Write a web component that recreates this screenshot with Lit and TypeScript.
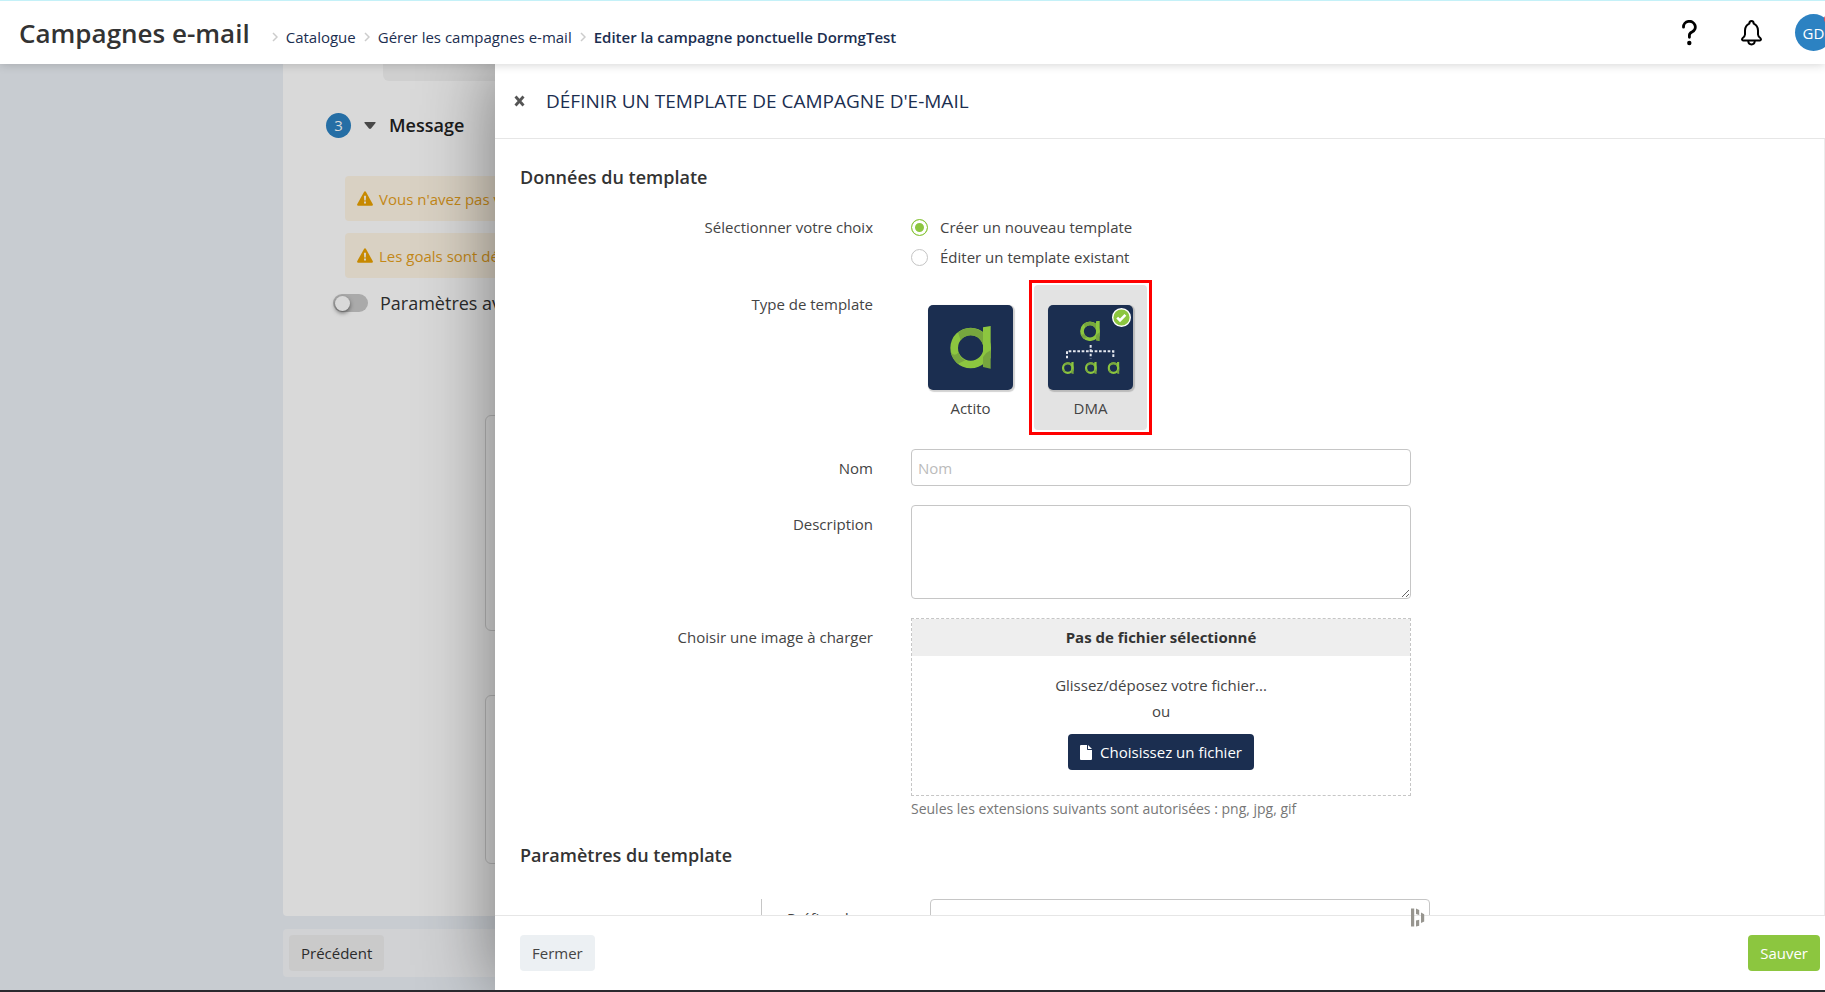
import { LitElement, html, css, svg } from "lit";
import { customElement, state } from "lit/decorators.js";

const letterA = svg`
  <path fill="#8cc63f" fill-rule="evenodd" d="M128 68a61 61 0 1 0 0 122a61 61 0 1 0 0-122zM128 91a38 38 0 1 1 0 76a38 38 0 1 1 0-76z"/>
  <path fill="#77a63e" d="M90 82Q128 56 165 82V120Q155 92 128 91Q108 92 98 106Z"/>
  <path fill="#77a63e" d="M68 140Q78 158 92 142Q96 160 112 166L90 176Q72 162 68 140Z"/>
  <path fill="#8cc63f" d="M165 67L188 63V160L165 172Z"/>
  <path fill="#77a63e" d="M188 136V191L165 186V156Q174 142 188 136Z"/>`;

@customElement("app-root")
export class AppRoot extends LitElement {
  @state() private mode = "new";
  @state() private type = "dma";

  static styles = css`
    :host {
      display: flex;
      flex-direction: column;
      position: relative;
      height: 100vh;
      overflow: hidden;
      box-sizing: border-box;
      border-bottom: 2px solid #2b2a2f;
      background: #ecf0f6;
      color: #333;
      font: 14px/20px "Open Sans", "Noto Sans", sans-serif;
    }
    *, *::before, *::after { box-sizing: border-box; }
    button, input, textarea { font: inherit; color: inherit; }
    button { border: 0; cursor: pointer; }
    svg { display: block; flex: none; }
    h1, h2, h3, p, ol { margin: 0; padding: 0; }

    .top {
      position: relative;
      z-index: 3;
      flex: none;
      display: flex;
      align-items: center;
      height: 64px;
      padding-left: 19px;
      background: #fff;
      border-top: 1px solid #c4f1f8;
      box-shadow: 0 0 10px rgba(0, 0, 0, 0.2);
    }
    .top h1 { font-size: 26px; line-height: 36px; font-weight: 600; white-space: nowrap; }
    .crumbs {
      display: flex;
      align-items: center;
      list-style: none;
      padding: 8px 0 0 22px;
      font-size: 15px;
      color: #1b2e50;
      white-space: nowrap;
    }
    .crumbs li { display: flex; align-items: center; gap: 8px; }
    .crumbs li + li { margin-left: 8px; }
    .crumbs a { color: inherit; text-decoration: none; }
    .current { font-weight: 600; }
    .tools { display: flex; align-items: center; margin-left: auto; }
    .icon { padding: 0; background: none; }
    .bell { margin: 0 33px 0 44px; }
    .avatar {
      position: relative;
      width: 37px;
      height: 37px;
      margin-right: -7px;
      padding: 0;
      border-radius: 50%;
      background: #2c82c2;
      color: #fff;
      font-size: 15px;
    }
    .dot { position: absolute; top: 1px; right: 0; width: 8px; height: 8px; border-radius: 50%; background: #ee4b52; }

    .page { flex: 1; min-height: 0; display: flex; flex-direction: column; gap: 13px; padding: 0 0 13px 283px; }
    .card { flex: 1; min-height: 0; overflow: hidden; background: #fff; border-radius: 0 0 4px 4px; }
    .ghost { height: 17px; margin-left: 100px; background: #f4f4f4; border-radius: 0 0 0 6px; }
    .step { display: flex; align-items: center; margin: 31px 0 0 43px; height: 26px; }
    .num { width: 25px; height: 25px; border-radius: 50%; background: #2c82c2; color: #fff; font-size: 15px; line-height: 25px; text-align: center; }
    .step svg { margin: 0 13px; }
    .step h2 { font-size: 18px; line-height: 26px; font-weight: 600; color: #222; }
    .alerts { display: grid; gap: 12px; margin: 38px 0 0 62px; }
    .alert {
      display: flex;
      align-items: center;
      gap: 6px;
      height: 45px;
      padding-left: 12px;
      background: #fff6e6;
      border-radius: 4px;
      color: #e6a01c;
      font-size: 15px;
    }
    .switch { display: flex; align-items: center; gap: 12px; height: 26px; margin: 12px 0 0 50px; font-size: 18px; }
    .switch input {
      appearance: none;
      width: 35px;
      height: 18px;
      margin: 0;
      padding: 2px;
      border-radius: 9px;
      background: #c8c8c8;
    }
    .switch input::before {
      content: "";
      display: block;
      width: 15px;
      height: 15px;
      border-radius: 50%;
      background: #fff;
      box-shadow: 0 2px 4px rgba(0, 0, 0, 0.5);
    }
    .frames { display: grid; gap: 64px; margin: 99px 0 0 202px; }
    .frame { height: 216px; border: 1px solid #d8d8d8; border-radius: 6px; }
    .frame.low { height: 169px; }
    .bar { flex: none; display: flex; align-items: center; height: 48px; padding-left: 6px; background: #f6f7fa; border-radius: 4px; }
    .prev { height: 36px; padding: 0 12px; border-radius: 4px; background: #eee; font-size: 15px; }

    .shade { position: absolute; z-index: 1; inset: 0; background: rgba(0, 0, 0, 0.15); }
    .drawer {
      position: absolute;
      z-index: 2;
      inset: 64px 0 0 495px;
      display: flex;
      flex-direction: column;
      background: #fff;
      color: #444;
      box-shadow: 0 0 70px rgba(0, 0, 0, 0.45);
    }
    .head { flex: none; display: flex; align-items: center; gap: 21px; height: 75px; padding-left: 19px; border-bottom: 1px solid #e6e6e6; }
    .head h2 { font-size: 19px; line-height: 28px; font-weight: 400; color: #1b2e50; text-transform: uppercase; }
    .body { flex: 1; min-height: 0; overflow: hidden; padding: 26px 25px 0; border-right: 1px solid #ececec; }
    h3 { font-size: 18px; line-height: 24px; font-weight: 600; color: #333; }
    .row { display: grid; grid-template-columns: 353px minmax(0, 500px); column-gap: 38px; margin-top: 19px; font-size: 15px; }
    .name { padding-top: 9px; text-align: right; }
    .radios { display: grid; gap: 12px; padding-top: 10px; }
    .radio { display: flex; align-items: center; gap: 12px; line-height: 18px; }
    .radio input { appearance: none; width: 17px; height: 17px; margin: 0; border: 1px solid #c4c4c4; border-radius: 50%; background: #fff; }
    .radio input:checked { border-color: #8cc63f; background: #8cc63f; box-shadow: inset 0 0 0 3px #fff; }
    .tiles { display: flex; gap: 7px; padding-left: 3px; }
    .tile {
      position: relative;
      width: 113px;
      height: 145px;
      padding: 20px 14px 0;
      border-radius: 4px;
      text-align: center;
      cursor: pointer;
    }
    .tile input { position: absolute; opacity: 0; }
    .tile.on { background: #e3e3e3; }
    .tile.on::after { content: ""; position: absolute; inset: -5px; border: 3px solid #f00; }
    .logo { border-radius: 5px; background: #1b2e50; box-shadow: 1px 1px 1px 1px rgba(0, 0, 0, 0.18); }
    .tile span { display: block; margin-top: 8px; }
    .tick { position: absolute; top: 23px; right: 16px; }
    .text { width: 100%; height: 37px; padding: 0 6px; border: 1px solid #c6c6c6; border-radius: 4px; background: #fff; }
    .text::placeholder { color: #bbb; }
    .area { display: block; height: 94px; padding: 6px; }
    .drop { border: 1px dashed #c6c6c6; text-align: center; }
    .drop strong { display: block; background: #eee; color: #333; font-weight: 700; font-size: 15px; line-height: 37px; }
    .zone { padding: 16px 0 25px; line-height: 26px; }
    .pick {
      display: inline-flex;
      align-items: center;
      gap: 8px;
      height: 36px;
      margin-top: 10px;
      padding: 0 12px;
      border-radius: 4px;
      background: #1b2e50;
      color: #fff;
      font-weight: 500;
      vertical-align: top;
    }
    .hint { margin-top: 3px; font-size: 14px; color: #777; }
    .second { margin-top: 24px; }
    .nested { display: grid; grid-template-columns: 143px minmax(0, 500px); margin: 32px 0 0 241px; padding-left: 25px; border-left: 1px solid #c6c6c6; font-size: 15px; }
    .nested .name { text-align: left; }
    .foot { position: relative; flex: none; display: flex; align-items: center; justify-content: space-between; height: 75px; padding: 0 5px 0 25px; border-top: 1px solid #e6e6e6; font-size: 15px; }
    .close { height: 36px; padding: 0 12px; border-radius: 4px; background: #ecf0f3; }
    .save { height: 36px; padding: 0 12px; border-radius: 4px; background: #8cc63f; color: #fff; font-weight: 500; }
    .helper { position: absolute; top: -8px; left: 916px; }
  `;

  private crumb() {
    return html`<svg width="6" height="10" viewBox="0 0 6 10" fill="none" stroke="#ccc" stroke-width="1.5" aria-hidden="true"><path d="M1 1l4 4-4 4"/></svg>`;
  }

  private warning(text: string) {
    return html`<div class="alert">
      <svg width="16" height="15" viewBox="0 0 16 15"><path fill="#eaa200" d="M8 0.3Q8.6 0.3 9 1l6.7 12q.7 1.6-.9 1.8H1.2Q-.4 14.600.3 13L7 1Q7.400.3 8 .3z"/><path fill="#fff6e6" d="M6.900 4.700h2.200l-.3 4.800H7.200zM7 10.600h2v2H7z"/></svg>
      <span>${text}</span>
    </div>`;
  }

  private radio(value: string, text: string) {
    return html`<label class="radio">
      <input type="radio" name="mode" .checked=${this.mode === value} @change=${() => (this.mode = value)} />${text}
    </label>`;
  }

  private tile(value: string, text: string, art: unknown) {
    const on = this.type === value;
    return html`<label class="tile ${on ? "on" : ""}">
      <input type="radio" name="type" .checked=${on} @change=${() => (this.type = value)} />
      <svg class="logo" width="85" height="85" viewBox="0 0 255 255" aria-hidden="true">${art}</svg>
      ${on
        ? html`<svg class="tick" width="19" height="19" viewBox="0 0 19 19"><circle cx="9.500" cy="9.500" r="8.800" fill="#8cc63f" stroke="#fff" stroke-width="1.400"/><path d="M5.200 9.600l2.800 2.800 5.400-5.600" fill="none" stroke="#fff" stroke-width="2.600"/></svg>`
        : ""}
      <span>${text}</span>
    </label>`;
  }

  render() {
    const small = (x: number, y: number, w: number) =>
      svg`<svg x=${x} y=${y} width=${w} height=${w} viewBox="65 63 126 128">${letterA}</svg>`;
    return html`
      <header class="top">
        <h1>Campagnes e-mail</h1>
        <nav aria-label="Fil d'Ariane">
          <ol class="crumbs">
            <li>${this.crumb()}<a href="#">Catalogue</a></li>
            <li>${this.crumb()}<a href="#">Gérer les campagnes e-mail</a></li>
            <li>${this.crumb()}<a href="#" class="current">Editer la campagne ponctuelle DormgTest</a></li>
          </ol>
        </nav>
        <div class="tools">
          <button class="icon" aria-label="Aide">
            <svg width="15" height="26" viewBox="0 0 15 26"><path d="M1.500 7.200A5.900 5.700 0 1 1 10 12.100Q7.400 13.300 7.400 15.300V17.300" fill="none" stroke="#000" stroke-width="2.800" stroke-linecap="round"/><circle cx="7.300" cy="23" r="2.200"/></svg>
          </button>
          <button class="icon bell" aria-label="Notifications">
            <svg width="21" height="26" viewBox="0 0 21 26" fill="none" stroke="#000" stroke-width="2" stroke-linejoin="round"><path d="M8.300 3.700Q8.300 1 10.500 1T12.700 3.700Q16.800 5.400 17 10.500V14.500Q17.200 16.600 19.300 18Q20.800 20 18.900 20.400H2.100Q.2 20 1.700 18Q3.800 16.600 4 14.500V10.500Q4.200 5.400 8.300 3.700z"/><path d="M7.200 20.800Q7.400 24.500 10.500 24.500T13.800 20.800"/></svg>
          </button>
          <button class="avatar">GD<i class="dot"></i></button>
        </div>
      </header>

      <main class="page">
        <section class="card">
          <div class="ghost"></div>
          <div class="step">
            <span class="num">3</span>
            <svg width="12" height="7" viewBox="0 0 12 7"><path fill="#555" d="M1 0h10q1.200 0 .5 1L7 6.500q-1 .9-2 0L.5 1Q-.2 0 1 0z"/></svg>
            <h2>Message</h2>
          </div>
          <div class="alerts">
            ${this.warning("Vous n'avez pas validé")}
            ${this.warning("Les goals sont désactivés")}
          </div>
          <label class="switch"><input type="checkbox" />Paramètres avancés</label>
          <div class="frames"><div class="frame"></div><div class="frame low"></div></div>
        </section>
        <div class="bar"><button class="prev">Précédent</button></div>
      </main>
      <div class="shade"></div>

      <aside class="drawer" role="dialog" aria-labelledby="title">
        <div class="head">
          <button class="icon" aria-label="Fermer le panneau">
            <svg width="11" height="12" viewBox="0 0 11 12"><path d="M1.500 1.500l8 9M9.500 1.500l-8 9" stroke="#555" stroke-width="2.800"/></svg>
          </button>
          <h2 id="title">Définir un template de campagne d'e-mail</h2>
        </div>
        <div class="body">
          <h3>Données du template</h3>
          <div class="row" role="radiogroup" aria-labelledby="choice">
            <div class="name" id="choice">Sélectionner votre choix</div>
            <div class="radios">
              ${this.radio("new", "Créer un nouveau template")}
              ${this.radio("edit", "Éditer un template existant")}
            </div>
          </div>
          <div class="row" role="radiogroup" aria-labelledby="kind">
            <div class="name" id="kind">Type de template</div>
            <div class="tiles">
              ${this.tile("actito", "Actito", letterA)}
              ${this.tile("dma", "DMA", svg`
                ${small(95, 47, 62)}
                <path d="M57 160V139H196V160M128 120V160" fill="none" stroke="#e4e7ee" stroke-width="6" stroke-dasharray="8 5"/>
                ${small(41, 170, 37)}${small(110, 170, 37)}${small(178, 170, 37)}`)}
            </div>
          </div>
          <div class="row">
            <label class="name" for="nom">Nom</label>
            <input class="text" id="nom" placeholder="Nom" />
          </div>
          <div class="row">
            <label class="name" for="desc">Description</label>
            <textarea class="text area" id="desc"></textarea>
          </div>
          <div class="row">
            <label class="name" for="file">Choisir une image à charger</label>
            <div>
              <div class="drop">
                <strong>Pas de fichier sélectionné</strong>
                <div class="zone">
                  <p>Glissez/déposez votre fichier...</p>
                  <p>ou</p>
                  <button class="pick" id="file">
                    <svg width="12" height="15" viewBox="0 0 12 15"><path fill="#fff" d="M1 0h6v4.200q0 .8.800.8H12v9q0 1-1 1H1q-1 0-1-1V1Q0 0 1 0zM8 0l4 4H8z"/></svg>
                    Choisissez un fichier
                  </button>
                </div>
              </div>
              <p class="hint">Seules les extensions suivants sont autorisées : png, jpg, gif</p>
            </div>
          </div>
          <h3 class="second">Paramètres du template</h3>
          <div class="nested">
            <label class="name" for="prefix">Préfixe de</label>
            <input class="text" id="prefix" />
          </div>
        </div>
        <div class="foot">
          <svg class="helper" width="14" height="19" viewBox="0 0 14 19" fill="#97958f"><path d="M0 .5h3.200V18.500H0zM5 .5l3.200 1.500v5L5 6zM5 12.500l3.200-.8v6L5 18.500zM10 4.500l3.200 1.800V13.500L10 15z"/></svg>
          <button class="close">Fermer</button>
          <button class="save">Sauver</button>
        </div>
      </aside>
    `;
  }
}
